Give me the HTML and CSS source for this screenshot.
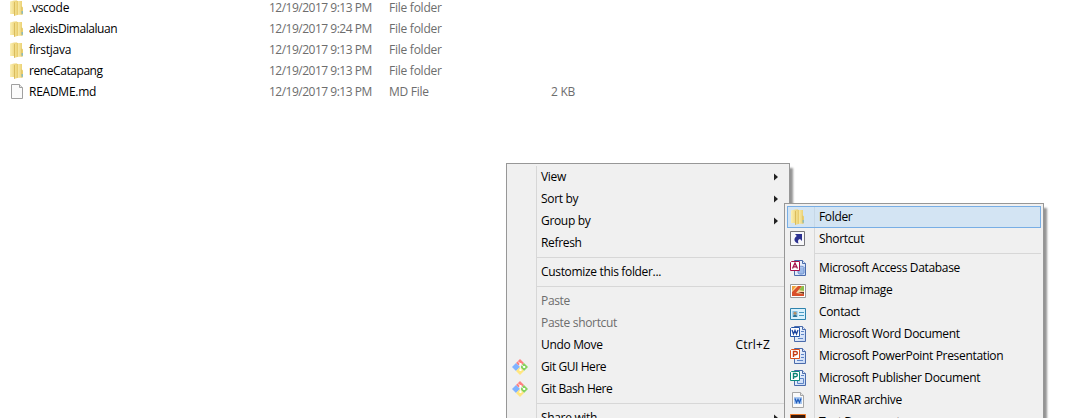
FILE: index.html
```html
<!DOCTYPE html>
<html lang="en">
<head>
<meta charset="utf-8">
<title>File list</title>
<link rel="stylesheet" href="styles.css">
</head>
<body>
<svg class="defs" aria-hidden="true">
  <defs>
    <linearGradient id="gold" x1="0" x2="1"><stop offset="0" stop-color="#fbf0b4"/><stop offset="1" stop-color="#e8cb68"/></linearGradient>
    <linearGradient id="gold2" x1="0" x2="1"><stop offset="0" stop-color="#cfab45"/><stop offset=".4" stop-color="#f3e08e"/><stop offset="1" stop-color="#e6c867"/></linearGradient>
    <linearGradient id="page" x1="0" y1="0" x2="1" y2="1"><stop offset="0" stop-color="#fff"/><stop offset="1" stop-color="#c3d6f5"/></linearGradient>
    <symbol id="folder" viewBox="0 0 16 16">
      <path d="M1 1.500 5 .5h3V14H1z" fill="url(#gold)"/>
      <path d="M8 1h5v5.500l1 1v7l-6 .5z" fill="url(#gold)"/>
      <path d="M5 2.200 9 .8v14L5 16z" fill="url(#gold2)"/>
      <path d="M12.500 6.500v8" stroke="#dcbf62" stroke-width=".6"/>
      <path d="M13.200 11v2.800" stroke="#62b5e5"/>
    </symbol>
    <symbol id="file" viewBox="0 0 16 16">
      <path d="M2.500.5h8l3 3v11h-11z" fill="#fbfbfb" stroke="#a0a0a0"/>
      <path d="M10.500.5v3h3" fill="#e6e6e6" stroke="#a0a0a0"/>
    </symbol>
    <symbol id="shortcut" viewBox="0 0 16 16">
      <path d="M.5.5h14v14H.5z" fill="#f7f7fa" stroke="#77777b"/>
      <path d="M5 3h7v7l-2-2C8 8.500 7.500 10 8.500 12.500 4 11.500 3 7.500 6.800 5z" fill="#2c3190"/>
    </symbol>
    <symbol id="doc" viewBox="0 0 16 16">
      <path d="M4.500.5h8l3 3v12h-11z" fill="url(#page)" stroke="#4a6bab"/>
      <path d="M12.500.5v3h3" fill="#dce8fb" stroke="#4a6bab"/>
    </symbol>
    <symbol id="git" viewBox="0 0 16 16">
      <path d="m8 0 4 4-2.500 2.500L8 5 6.500 6.500 4 4z" fill="#ff8080"/>
      <path d="m4 4 4 4-4 4-4-4z" fill="#80b3ff"/>
      <path d="m12 4 4 4-4 4-4-4z" fill="#87d35f"/>
      <path d="m8 8 4 4-4 4-4-4z" fill="#ffe680"/>
      <path d="M6 2.500 8.500 5v6M8.500 5 12 8" stroke="#f4f4f4" fill="none"/>
      <path d="M7.500 4h2v2h-2zM7.500 10h2v2h-2zM11.200 7h2v2h-2z" fill="#fff"/>
    </symbol>
    <symbol id="arrow" viewBox="0 0 4 8"><path d="M0 .5 4 4 0 7.500z" fill="#222"/></symbol>
  </defs>
</svg>

<main class="files">
  <div class="row"><svg class="icon"><use href="#folder"/></svg><span class="name">.vscode</span><span class="date">12/19/2017 9:13 PM</span><span class="type">File folder</span><span class="size"></span></div>
  <div class="row"><svg class="icon"><use href="#folder"/></svg><span class="name tight">alexisDimalaluan</span><span class="date">12/19/2017 9:24 PM</span><span class="type">File folder</span><span class="size"></span></div>
  <div class="row"><svg class="icon"><use href="#folder"/></svg><span class="name">firstjava</span><span class="date">12/19/2017 9:13 PM</span><span class="type">File folder</span><span class="size"></span></div>
  <div class="row"><svg class="icon"><use href="#folder"/></svg><span class="name tight">reneCatapang</span><span class="date">12/19/2017 9:13 PM</span><span class="type">File folder</span><span class="size"></span></div>
  <div class="row"><svg class="icon"><use href="#file"/></svg><span class="name">README.md</span><span class="date">12/19/2017 9:13 PM</span><span class="type">MD File</span><span class="size">2 KB</span></div>
</main>

<nav class="menu context">
  <div class="item"><span class="glyph"></span><span class="label">View</span><svg class="arrow"><use href="#arrow"/></svg></div>
  <div class="item"><span class="glyph"></span><span class="label">Sort by</span><svg class="arrow"><use href="#arrow"/></svg></div>
  <div class="item"><span class="glyph"></span><span class="label">Group by</span><svg class="arrow"><use href="#arrow"/></svg></div>
  <div class="item"><span class="glyph"></span><span class="label">Refresh</span></div>
  <div class="sep"></div>
  <div class="item"><span class="glyph"></span><span class="label">Customize this folder...</span></div>
  <div class="sep"></div>
  <div class="item off"><span class="glyph"></span><span class="label">Paste</span></div>
  <div class="item off"><span class="glyph"></span><span class="label">Paste shortcut</span></div>
  <div class="item"><span class="glyph"></span><span class="label">Undo Move</span><span class="key">Ctrl+Z</span></div>
  <div class="item"><span class="glyph"><svg class="icon"><use href="#git"/></svg></span><span class="label tight">Git GUI Here</span></div>
  <div class="item"><span class="glyph"><svg class="icon"><use href="#git"/></svg></span><span class="label tight">Git Bash Here</span></div>
  <div class="sep"></div>
  <div class="item"><span class="glyph"></span><span class="label">Share with</span><svg class="arrow"><use href="#arrow"/></svg></div>
</nav>

<nav class="menu submenu">
  <div class="item hot"><span class="glyph"><svg class="icon"><use href="#folder"/></svg></span><span class="label">Folder</span></div>
  <div class="item"><span class="glyph"><svg class="icon"><use href="#shortcut"/></svg></span><span class="label">Shortcut</span></div>
  <div class="sep"></div>
  <div class="item"><span class="glyph"><svg class="icon" viewBox="0 0 16 16"><use href="#doc"/><ellipse cx="11" cy="7.500" rx="3" ry="1.300" fill="#bcd1f3" stroke="#5f86c8" stroke-width=".8"/><path d="M8 7.500v5.500c1 1.500 5 1.500 6 0V7.500" fill="#9cb9e8" stroke="#5f86c8" stroke-width=".8"/><path d="M1.500 1.500h8v9h-9v-8z" fill="#fff" stroke="#a4104a"/><path d="m2.500 8.500 2.500-5.500 2.500 5.500M3.500 6.800h3" fill="none" stroke="#a4104a" stroke-width="1.300"/></svg></span><span class="label">Microsoft Access Database</span></div>
  <div class="item"><span class="glyph"><svg class="icon" viewBox="0 0 16 16"><path d="M.5 2.500h15v13H.5z" fill="#fff" stroke="#999"/><path d="M2 4h12v10H2z" fill="#f4d8a3"/><path d="M2 10 8 4h4L6 11l8 1v2H2z" fill="#d9502b"/><path d="m9 8 3-4h2v5z" fill="#8ebd4c"/><path d="m2 4 4 0-4 5z" fill="#f0a13a"/><path d="M8 10h6v2z" fill="#6e3524"/></svg></span><span class="label">Bitmap image</span></div>
  <div class="item"><span class="glyph"><svg class="icon" viewBox="0 0 16 16"><path d="M.5 4.500h15v11H.5z" fill="#d9f1fc" stroke="#2e83ad"/><path d="M2.500 7h5v6h-5z" fill="#83bde0"/><circle cx="5" cy="9.300" r="1.500" fill="#b58e62"/><path d="M3 13c0-3 4-3 4 0z" fill="#2c7395"/><path d="M9 8.500h5M9 11.500h5" stroke="#4a9bc4"/></svg></span><span class="label">Contact</span></div>
  <div class="item"><span class="glyph"><svg class="icon" viewBox="0 0 16 16"><use href="#doc"/><path d="M8 12.500h5M11 5.500h3M11 8.500h3" stroke="#5f86c8"/><path d="M1.500 1.500h8v9h-9v-8z" fill="#fff" stroke="#2455a8"/><path d="m2 4 1.500 4L5 4.500 6.500 8 8 4" fill="none" stroke="#2047a0" stroke-width="1.300"/></svg></span><span class="label">Microsoft Word Document</span></div>
  <div class="item"><span class="glyph"><svg class="icon" viewBox="0 0 16 16"><use href="#doc"/><path d="M7 12.500h6M11 6.500h3M11 9.500h3" stroke="#5f86c8"/><path d="M1.500 1.500h8v9h-9v-8z" fill="#fff" stroke="#d9501e"/><path d="M3.500 9V3.500h2c2.500 0 2.500 3.200 0 3.200h-2" fill="none" stroke="#c63e16" stroke-width="1.400"/></svg></span><span class="label">Microsoft PowerPoint Presentation</span></div>
  <div class="item"><span class="glyph"><svg class="icon" viewBox="0 0 16 16"><use href="#doc"/><path d="M7.500 8.500h6v5h-6zM11 5.500h3" fill="#d4e2f8" stroke="#5f86c8"/><path d="M1.500 1.500h8v9h-9v-8z" fill="#fff" stroke="#0c8a7d"/><path d="M3.500 9V3.500h2c2.500 0 2.500 3.200 0 3.200h-2" fill="none" stroke="#0c8275" stroke-width="1.400"/></svg></span><span class="label">Microsoft Publisher Document</span></div>
  <div class="item"><span class="glyph"><svg class="icon" viewBox="0 0 16 16"><path d="M2.500.5h8l3 3v12h-11z" fill="#fafafa" stroke="#a5a5a5"/><path d="M10.500.5v3h3" fill="#e5e5e5" stroke="#a5a5a5"/><path d="M4 5h8v7H4z" fill="#a9c7ef"/><path d="m5 6.500 1.500 4L8 7.500l1.500 3L11 6.500" fill="none" stroke="#1f5dbd" stroke-width="1.300"/></svg></span><span class="label">WinRAR archive</span></div>
  <div class="item"><span class="glyph"><svg class="icon" viewBox="0 0 16 16"><path d="M.5.5h15v15H.5z" fill="#35190d" stroke="#ee7623"/></svg></span><span class="label">Text Document</span></div>
</nav>
</body>
</html>
```

FILE: styles.css
```css
html, body { margin: 0; height: 418px; overflow: hidden; background: #fff; }
body { position: relative; font: 12px "Open Sans", "Noto Sans", sans-serif; color: #000; white-space: nowrap; }
.defs { position: absolute; width: 0; height: 0; }
.icon { width: 16px; height: 16px; display: block; flex: none; }
.files { margin-top: -3px; padding-left: 9px; width: 566px; }
.row { display: grid; grid-template-columns: 20px 240px 120px 120px 66px; height: 21px; align-items: center; line-height: 22px; letter-spacing: -0.25px; }
.tight { letter-spacing: -0.43px; }
.date, .type, .size { color: #6d6d6d; }
.date { letter-spacing: -0.5px; }
.size { text-align: right; }
.menu { position: absolute; box-sizing: border-box; border: 1px solid #979797; padding: 2px; background: #f0f0f0; box-shadow: 4px 4px 2px -1px rgba(0,0,0,.42); letter-spacing: -0.33px; }
.menu::before { content: ""; position: absolute; left: 29px; top: 2px; bottom: 0; width: 1px; background: #d7d7d7; }
.context { left: 506px; top: 163px; width: 284px; height: 255px; overflow: hidden; border-bottom: 0; padding-bottom: 0; }
.submenu { left: 784px; top: 203px; width: 260px; height: 215px; overflow: hidden; border-bottom: 0; padding-bottom: 0; }
.item { position: relative; display: flex; align-items: center; height: 22px; box-sizing: border-box; }
.glyph { width: 27px; padding-left: 3px; box-sizing: border-box; margin-right: 5px; }
.label { flex: 1; height: 22px; line-height: 22px; }
.sep { height: 7px; margin-left: 28px; background: linear-gradient(#d7d7d7, #d7d7d7) 0 3px / 100% 1px no-repeat; }
.off { color: #6d6d6d; }
.key { height: 22px; line-height: 22px; margin-right: 17px; letter-spacing: 0.15px; }
.arrow { width: 4px; height: 8px; margin-right: 9px; }
.hot { background: rgba(182, 216, 245, .5); box-shadow: inset 0 0 0 1px #78aee5; }
```
